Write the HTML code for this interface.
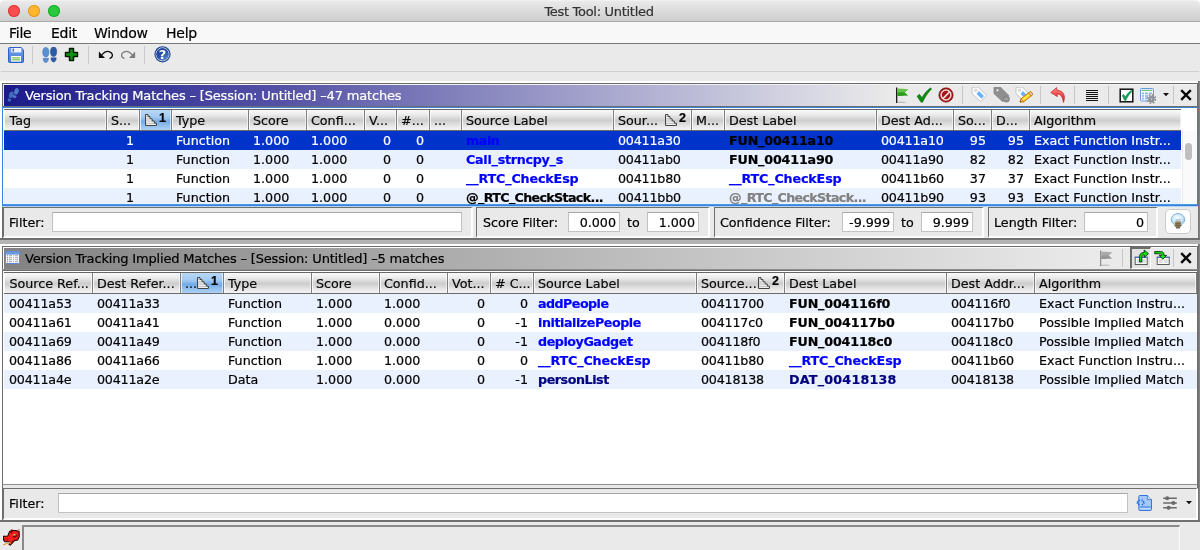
<!DOCTYPE html><html><head><meta charset='utf-8'><title>Test Tool: Untitled</title><style>
html,body{margin:0;padding:0}
body{width:1200px;height:550px;background:#eaeaea;position:relative;overflow:hidden;font-family:'DejaVu Sans','Liberation Sans',sans-serif;font-size:12.7px;color:#000;-webkit-text-stroke:0.2px}
.a{position:absolute}
.t{position:absolute;white-space:nowrap;line-height:19px;height:19px;overflow:hidden;top:0}
.b{font-weight:bold;letter-spacing:-0.45px}
.hd{position:absolute;height:20px;background:linear-gradient(#f9f9f9 0%,#eeeeee 20%,#d8d8d8 42%,#cdcdcd 52%,#d7d7d7 64%,#e8e8e8 82%,#f3f3f3 100%);border-top:1px solid #666;border-bottom:1px solid #6c6c6c}
.hc{position:absolute;top:0;height:20px;line-height:21px;white-space:nowrap;overflow:hidden;border-right:1px solid #7e7e7e;box-sizing:border-box;padding-left:4px;color:#0a0a0a;box-shadow:inset 1px 0 0 rgba(255,255,255,0.75),inset -1px 0 0 rgba(255,255,255,0.6)}
.hs{background:linear-gradient(#b9d7f5 0%,#a3caf1 35%,#72abe6 58%,#8ebdec 75%,#acd0f4 100%)}
.n{position:absolute;font-family:'Liberation Sans',sans-serif;font-weight:bold;font-size:12.5px;line-height:12px;color:#000}
.u{position:relative;top:-1.5px}
.row{position:absolute;left:0;height:19px}
.tf{position:absolute;background:#fff;border:1px solid #c2c2c2;border-top-color:#a8a8a8;box-sizing:border-box;text-align:right;line-height:20px;padding-right:3px;height:20px}
.sep{position:absolute;width:1px;height:18px;background:#c6c6c6}
.lb{position:absolute;height:20px;line-height:20px;white-space:nowrap}
</style></head><body><div id='w' style='position:absolute;left:0;top:0;width:1200px;height:550px;overflow:hidden;will-change:transform'>
<div class='a' style='left:0;top:0;width:1200px;height:6px;background:#fff'></div>
<div class='a' style='left:0;top:0;width:1200px;height:22px;background:linear-gradient(#f5f5f5 0%,#e9e9e9 7%,#cecece 100%);border-bottom:1px solid #aaaaaa;box-sizing:border-box;border-radius:5px 5px 0 0'></div>
<div class='a' style='left:8px;top:5px;width:12px;height:12px;border-radius:50%;background:#fc4d4e;box-shadow:inset 0 0 0 1px #df3a3d'></div>
<div class='a' style='left:28px;top:5px;width:12px;height:12px;border-radius:50%;background:#fdb62d;box-shadow:inset 0 0 0 1px #df9c22'></div>
<div class='a' style='left:48px;top:5px;width:12px;height:12px;border-radius:50%;background:#2ac83c;box-shadow:inset 0 0 0 1px #1cab2b'></div>
<div class='a' style='left:0;top:0;width:1200px;height:22px;line-height:23px;text-align:center;font-size:13px;color:#333;letter-spacing:-0.3px;padding-right:2px;box-sizing:border-box'>Test Tool: Untitled</div>
<div class='a' style='left:0;top:22px;width:1200px;height:21px;background:#f8f8f8;border-bottom:1px solid #7a7a7a'></div>
<div class='a' style='left:9px;top:23px;height:21px;line-height:21px;font-size:14px;letter-spacing:-0.25px'>File</div>
<div class='a' style='left:51px;top:23px;height:21px;line-height:21px;font-size:14px;letter-spacing:-0.25px'>Edit</div>
<div class='a' style='left:94px;top:23px;height:21px;line-height:21px;font-size:14px;letter-spacing:-0.25px'>Window</div>
<div class='a' style='left:166px;top:23px;height:21px;line-height:21px;font-size:14px;letter-spacing:-0.25px'>Help</div>
<div class='a' style='left:1px;top:71px;width:1198px;height:1px;background:#d0d0d0'></div>
<div class='a' style='left:32px;top:46px;width:1px;height:18px;background:#c8c8c8'></div>
<div class='a' style='left:88px;top:46px;width:1px;height:18px;background:#c8c8c8'></div>
<div class='a' style='left:144px;top:46px;width:1px;height:18px;background:#c8c8c8'></div>
<svg class='a' style='left:8px;top:47px' width='16' height='16' viewBox='0 0 16 16'><defs><linearGradient id='sv' x1='0' y1='0' x2='0' y2='1'><stop offset='0' stop-color='#7ea6ee'/><stop offset='0.5' stop-color='#5b8de2'/><stop offset='1' stop-color='#4a7cd8'/></linearGradient></defs>
<path d='M1.5 0.5h11.6l2.4 2.4v11.6a1 1 0 0 1-1 1h-13a1 1 0 0 1-1-1v-13a1 1 0 0 1 1-1z' fill='url(#sv)' stroke='#2f5fc4'/>
<rect x='3.2' y='1' width='10' height='4.4' fill='#eef3ff'/><rect x='4.6' y='1.6' width='1.3' height='3' fill='#2f57b0'/>
<rect x='3.2' y='9' width='9.8' height='5.6' fill='#fff'/><rect x='4.2' y='10.3' width='7.8' height='1.2' fill='#72bc44'/><rect x='4.2' y='12.2' width='7.8' height='1.2' fill='#72bc44'/></svg><svg class='a' style='left:42px;top:47px' width='16' height='16' viewBox='0 0 16 16'><g transform='translate(3.8 8) rotate(0) scale(1.0)'><path d='M0 -7.6c2.3 0 3.3 2.6 3.1 5.4c-0.2 2.5-1 4.2-3.1 4.2s-2.9-1.7-3.1-4.2c-0.2-2.8 0.8-5.4 3.1-5.4z' fill='#5a8fd2' stroke='#3f72b8' stroke-width='0.5'/><path d='M-2.6 3.3h5.2c0.1 2.6-0.9 4.2-2.6 4.2s-2.7-1.6-2.6-4.2z' fill='#5a8fd2' stroke='#3f72b8' stroke-width='0.5'/></g><g transform='translate(11.6 7.5) rotate(0) scale(1.0)'><path d='M0 -7.6c2.3 0 3.3 2.6 3.1 5.4c-0.2 2.5-1 4.2-3.1 4.2s-2.9-1.7-3.1-4.2c-0.2-2.8 0.8-5.4 3.1-5.4z' fill='#2e5aa6' stroke='#234a90' stroke-width='0.5'/><path d='M-2.6 3.3h5.2c0.1 2.6-0.9 4.2-2.6 4.2s-2.7-1.6-2.6-4.2z' fill='#2e5aa6' stroke='#234a90' stroke-width='0.5'/></g></svg><svg class='a' style='left:64px;top:47px' width='15' height='15' viewBox='0 0 15 15'><path d='M5.5 1.5h4v4h4v4h-4v4h-4v-4h-4v-4h4z' fill='#109410' stroke='#011a01' stroke-width='1.5' stroke-linejoin='round'/></svg><svg class='a' style='left:98px;top:48px' width='16' height='14' viewBox='0 0 16 14'><path d='M0.85 3.5V9.9H7z' fill='#0c0c0c'/><path d='M4.2 6.4C6 4.2 8 3.2 9.8 3.3C12.4 3.5 14.6 5.4 14.4 7.6C14.3 8.8 13.4 9.8 12 10.3' fill='none' stroke='#0c0c0c' stroke-width='1.3' stroke-linecap='round'/></svg><svg class='a' style='left:119.8px;top:48px' width='16' height='14' viewBox='0 0 16 14'><g transform='translate(16 0) scale(-1 1)'><path d='M0.85 3.5V9.9H7z' fill='#7c7c7c'/><path d='M4.2 6.4C6 4.2 8 3.2 9.8 3.3C12.4 3.5 14.6 5.4 14.4 7.6C14.3 8.8 13.4 9.8 12 10.3' fill='none' stroke='#7c7c7c' stroke-width='1.3' stroke-linecap='round'/></g></svg><svg class='a' style='left:153.5px;top:46.4px' width='17' height='17' viewBox='0 0 17 17'><defs><linearGradient id='hg' x1='0.2' y1='0' x2='0.9' y2='1'><stop offset='0' stop-color='#173a8c'/><stop offset='0.55' stop-color='#2c55a8'/><stop offset='1' stop-color='#6c9ad8'/></linearGradient></defs>
<circle cx='8.5' cy='8.3' r='8.1' fill='#1d4796'/><circle cx='8.5' cy='8.3' r='6.5' fill='none' stroke='#fff' stroke-width='0.8'/><circle cx='8.5' cy='8.3' r='6.1' fill='url(#hg)'/>
<text x='8.5' y='13.2' text-anchor='middle' font-family="'DejaVu Sans','Liberation Sans',sans-serif" font-weight='bold' font-size='13' fill='#fff'>?</text></svg>
<div class='a' style='left:0;top:81px;width:1200px;height:159px;background:#fff'></div>
<div class='a' style='left:1198px;top:81px;width:2px;height:159px;background:linear-gradient(90deg,#6a6a6a,#8c8c8c)'></div>
<div class='a' style='left:0;top:238px;width:1200px;height:2px;background:#707070'></div>
<div class='a' style='left:2px;top:83px;width:1196px;height:155px;border:1px solid #6c6c6c;box-sizing:border-box;background:#eaeaea'></div>
<div class='a' style='left:3px;top:84px;width:1194px;height:1px;background:#f2f2f2'></div>
<div class='a' style='left:3px;top:237px;width:1195px;height:1px;background:#fdfdfd'></div>
<div class='a' style='left:4px;top:85px;width:888px;height:21px;background:linear-gradient(90deg,#1a1a8a 0%,#2f2e94 10%,#5653a6 32%,#7573b5 45%,#a6a5cd 67%,#d6d6e3 90%,#eaeaea 100%)'></div>
<div class='a' style='left:25px;top:85px;height:21px;line-height:21px;color:#fff;font-size:13px;letter-spacing:-0.17px;white-space:nowrap'>Version Tracking Matches – [Session: Untitled] –47 matches</div>
<svg class='a' style='left:7px;top:87px' width='14' height='16' viewBox='0 0 14 16'><g opacity='0.8'><g transform='translate(3.6 9.6) rotate(20) scale(0.7)'><path d='M0 -7.6c2.3 0 3.3 2.6 3.1 5.4c-0.2 2.5-1 4.2-3.1 4.2s-2.9-1.7-3.1-4.2c-0.2-2.8 0.8-5.4 3.1-5.4z' fill='#4a7fc4' stroke='none' stroke-width='0.5'/><path d='M-2.6 3.3h5.2c0.1 2.6-0.9 4.2-2.6 4.2s-2.7-1.6-2.6-4.2z' fill='#4a7fc4' stroke='none' stroke-width='0.5'/></g><g transform='translate(8.8 6.2) rotate(20) scale(0.7)'><path d='M0 -7.6c2.3 0 3.3 2.6 3.1 5.4c-0.2 2.5-1 4.2-3.1 4.2s-2.9-1.7-3.1-4.2c-0.2-2.8 0.8-5.4 3.1-5.4z' fill='#5a92d4' stroke='none' stroke-width='0.5'/><path d='M-2.6 3.3h5.2c0.1 2.6-0.9 4.2-2.6 4.2s-2.7-1.6-2.6-4.2z' fill='#5a92d4' stroke='none' stroke-width='0.5'/></g></g></svg><svg class='a' style='left:895px;top:87px' width='16' height='16' viewBox='0 0 16 16'><g opacity='1'><rect x='1' y='0.5' width='1.3' height='15.5' fill='#1c1c1c'/><path d='M2.3 1.6C6 2.2 9 1.6 13.4 2.4L9.6 5.6L13 8.6C9 8.2 6 9.4 2.3 9z' fill='#62c446'/><path d='M2.3 5.5C6 5.6 8 5 9.6 5.6L13 8.6C9 8.2 6 9.4 2.3 9z' fill='#2f9a1e'/><ellipse cx='6' cy='15.3' rx='5.5' ry='0.7' fill='#000' opacity='0.18'/></g></svg><svg class='a' style='left:916px;top:87px' width='16' height='16' viewBox='0 0 16 16'><path d='M1 9.2L3.4 7.2L6 10.6C8.4 6.4 11 3.2 14.6 0.8L15.6 2C12 5.6 9.4 9.6 6.6 15.2L5 15.2z' fill='#118a11' stroke='#0a6a0a' stroke-width='0.5'/></svg><svg class='a' style='left:938px;top:87px' width='16' height='16' viewBox='0 0 16 16'><circle cx='8' cy='8' r='7.2' fill='#a51212'/><circle cx='8' cy='8' r='4.9' fill='none' stroke='#f3dada' stroke-width='1.5'/><path d='M4.9 11.6L11.6 4.9' stroke='#f3dada' stroke-width='1.7'/><circle cx='8' cy='8' r='7.2' fill='none' stroke='#7c0a0a' stroke-width='0.6'/></svg><svg class='a' style='left:971px;top:87px' width='17' height='17' viewBox='0 0 17 17'><path d='M1 0.3L7.3 0L15.7 8.4L9.7 14.7L1 6.6z' fill='#fdfdfd' stroke='#b8b8b8' stroke-width='0.8' stroke-linejoin='round'/><path d='M7.9 4.1L13 9L10.6 11.7L5.5 6.9z' fill='#68b3fd'/><circle cx='4.5' cy='3.3' r='1.2' fill='#f2f2f2' stroke='#b0b0b0' stroke-width='0.6'/></svg><svg class='a' style='left:993.2px;top:87px' width='18' height='17' viewBox='0 0 18 17'><path d='M1 0.3L7.3 0L15.7 8.4L9.7 14.7L1 6.6z' fill='#8e8e8e' stroke='#848484' stroke-width='0.8' stroke-linejoin='round'/><circle cx='4.5' cy='3.3' r='1.2' fill='#f4f4f4' stroke='#9a9a9a' stroke-width='0.6'/><circle cx='13.4' cy='12' r='3.2' fill='#8b8b8b' stroke='#7c7c7c' stroke-width='0.5'/><rect x='11.4' y='11.4' width='4' height='1.2' fill='#aeaeae'/></svg><svg class='a' style='left:1015.3px;top:87px' width='18' height='17' viewBox='0 0 18 17'><path d='M1 0.3L7.3 0L15.7 8.4L9.7 14.7L1 6.6z' fill='#fdfdfd' stroke='#b8b8b8' stroke-width='0.8' stroke-linejoin='round'/><path d='M7.9 4.1L13 9L10.6 11.7L5.5 6.9z' fill='#68b3fd'/><circle cx='4.5' cy='3.3' r='1.2' fill='#f2f2f2' stroke='#b0b0b0' stroke-width='0.6'/><g transform='translate(5 15) rotate(-37.5)'><path d='M0 0L3-2h10.4a1.6 1.6 0 0 1 1.6 1.6v0.8a1.6 1.6 0 0 1-1.6 1.6h-10.4z' fill='#f8d51e' stroke='#c87812' stroke-width='0.9' stroke-linejoin='round'/><rect x='3' y='-0.7' width='9.6' height='1.1' fill='#fbe96a'/><path d='M0 0L3-2v4z' fill='#f3c79a' stroke='#b86a10' stroke-width='0.6'/><path d='M0 0l1.1-0.75v1.5z' fill='#4a2a08'/><path d='M12.4-2h1a1.6 1.6 0 0 1 1.6 1.6v0.8a1.6 1.6 0 0 1-1.6 1.6h-1z' fill='#f6c9a8' stroke='#b86a10' stroke-width='0.7'/></g></svg><svg class='a' style='left:1050px;top:87px' width='17' height='16' viewBox='0 0 17 16'><defs><linearGradient id='ra' x1='0' y1='0' x2='0' y2='1'><stop offset='0' stop-color='#ff8d8d'/><stop offset='0.5' stop-color='#f04848'/><stop offset='1' stop-color='#d82424'/></linearGradient></defs>
<path d='M6.6 0.6L0.8 5.6L7.4 9.6L7 6.9C10.6 6.8 12.6 9.6 13.4 15.4C16.2 8.6 13 3.4 6.9 3.2z' fill='url(#ra)' stroke='#c42020' stroke-width='0.7' stroke-linejoin='round'/></svg><svg class='a' style='left:1086px;top:90px' width='12' height='11' viewBox='0 0 12 11'><rect x='0' y='0' width='12' height='1' fill='#111'/><rect x='0' y='2' width='12' height='1' fill='#111'/><rect x='0' y='4' width='12' height='1' fill='#111'/><rect x='0' y='6' width='12' height='1' fill='#111'/><rect x='0' y='8' width='12' height='1' fill='#111'/><rect x='0' y='10' width='12' height='1' fill='#111'/></svg><svg class='a' style='left:1118.6px;top:87.6px' width='15' height='15' viewBox='0 0 15 15'><rect x='1.2' y='1.2' width='12.6' height='12.6' fill='#fff' stroke='#111' stroke-width='1.5'/><path d='M3.2 7.6L4.6 6.4L6.4 8.8C8 6 10 3.8 12.6 2.2L13.2 3.2C10.6 5.6 8.6 8.6 6.8 12.4L5.6 12.4z' fill='#14a05a' stroke='#0b8048' stroke-width='0.5'/></svg><svg class='a' style='left:1140px;top:88px' width='16' height='16' viewBox='0 0 16 16'><rect x='0.5' y='0.5' width='13' height='12.5' rx='1' fill='#f4f8ff' stroke='#6b9ae0'/><rect x='1' y='1' width='12' height='1.8' fill='#d4e4fb'/><rect x='2' y='2' width='10' height='1' fill='#6ec66e'/>
<g fill='#8db0e8'><rect x='2' y='4.6' width='2' height='1.6'/><rect x='5' y='4.6' width='3' height='1.6'/><rect x='9' y='4.6' width='3' height='1.6'/><rect x='2' y='7.2' width='2' height='1.6'/><rect x='5' y='7.2' width='3' height='1.6'/><rect x='2' y='9.8' width='2' height='1.6'/><rect x='5' y='9.8' width='2' height='1.6'/></g>
<g transform='translate(11.4 11)'><circle r='4.2' fill='none' stroke='#8a8a8a' stroke-width='1.6' stroke-dasharray='1.7 1.6'/><circle r='3.1' fill='#9d9d9d' stroke='#777' stroke-width='0.5'/><circle r='1.5' fill='#9cc0ee' stroke='#6a6a6a' stroke-width='0.5'/></g></svg><svg class='a' style='left:1163px;top:93px' width='6' height='4' viewBox='0 0 6 4'><path d='M0 0h6L3 3.2z' fill='#111'/></svg><svg class='a' style='left:1180px;top:89px' width='12' height='12' viewBox='0 0 12 12'><path d='M1.2 1.2L10.8 10.8M10.8 1.2L1.2 10.8' stroke='#0a0a0a' stroke-width='2.4' stroke-linecap='butt'/></svg><div class='sep' style='left:962px;top:86px'></div><div class='sep' style='left:1040px;top:86px'></div><div class='sep' style='left:1074px;top:86px'></div><div class='sep' style='left:1108px;top:86px'></div><div class='sep' style='left:1173px;top:86px'></div>
<div class='a' style='left:2px;top:106px;width:1196px;height:1px;background:#6e6e6e'></div>
<div class='a' style='left:2px;top:107px;width:1196px;height:99px;border:1px solid #3484de;box-sizing:border-box;background:#fff'></div>
<div class='a' style='left:3px;top:204px;width:1194px;height:1px;background:#4e97e4'></div>
<div class='a' style='left:2px;top:206px;width:1196px;height:1px;background:#b5d3f2'></div>
<div class='hd' style='left:4px;top:109px;width:1177px'>
<div class='hc' style='left:0px;width:103px;padding-left:5.5px;'>Tag</div>
<div class='hc' style='left:103px;width:33px;'>S...</div>
<div class='hc hs' style='left:136px;width:32px;'><svg class='a' style='left:5px;top:4px' width='12' height='12' viewBox='0 0 12 12'><path d='M0.55 0.55H3V2.6H5V4.8H7.1V7H9.3V9.2H11.45V11.45H0.55z' fill='#fbfbfb' stroke='#3c3c3c' stroke-width='1' stroke-linejoin='round'/><path d='M1.1 2.7H3M1.1 4.9H5M1.1 7.1H7.1M1.1 9.3H9.3' stroke='#a4a4a4' stroke-width='0.8'/><rect x='1.1' y='5.3' width='5' height='1.3' fill='#d4d4d4'/></svg><div class='n' style='left:19px;top:2px'>1</div></div>
<div class='hc' style='left:168px;width:77px;'>Type</div>
<div class='hc' style='left:245px;width:58px;'>Score</div>
<div class='hc' style='left:303px;width:58px;'>Confi...</div>
<div class='hc' style='left:361px;width:32px;'>V...</div>
<div class='hc' style='left:393px;width:33px;'>#...</div>
<div class='hc' style='left:426px;width:32px;'>...</div>
<div class='hc' style='left:458px;width:152px;'>Source Label</div>
<div class='hc' style='left:610px;width:78px;'>Sour...<svg class='a' style='left:51px;top:4px' width='12' height='12' viewBox='0 0 12 12'><path d='M0.55 0.55H3V2.6H5V4.8H7.1V7H9.3V9.2H11.45V11.45H0.55z' fill='#fbfbfb' stroke='#3c3c3c' stroke-width='1' stroke-linejoin='round'/><path d='M1.1 2.7H3M1.1 4.9H5M1.1 7.1H7.1M1.1 9.3H9.3' stroke='#a4a4a4' stroke-width='0.8'/><rect x='1.1' y='5.3' width='5' height='1.3' fill='#d4d4d4'/></svg><div class='n' style='left:65px;top:2px'>2</div></div>
<div class='hc' style='left:688px;width:33px;'>M...</div>
<div class='hc' style='left:721px;width:152px;'>Dest Label</div>
<div class='hc' style='left:873px;width:77px;'>Dest Ad...</div>
<div class='hc' style='left:950px;width:38px;'>So...</div>
<div class='hc' style='left:988px;width:38px;'>D...</div>
<div class='hc' style='left:1026px;width:152px;border-right-color:transparent;'>Algorithm</div>
</div>
<div class='a' style='left:4px;top:131px;width:1177px;height:73px;overflow:hidden'>
<div class='row' style='top:0px;width:1177px;background:#0033c9;color:#fff'>
<div class='t' style='left:102px;width:33px;text-align:right;padding-right:5px;box-sizing:border-box;'>1</div>
<div class='t' style='left:167px;width:77px;padding-left:5px;box-sizing:border-box;'>Function</div>
<div class='t' style='left:244px;width:58px;padding-left:5px;box-sizing:border-box;'>1.000</div>
<div class='t' style='left:302px;width:58px;padding-left:5px;box-sizing:border-box;'>1.000</div>
<div class='t' style='left:360px;width:32px;text-align:right;padding-right:5px;box-sizing:border-box;'>0</div>
<div class='t' style='left:392px;width:33px;text-align:right;padding-right:5px;box-sizing:border-box;'>0</div>
<div class='t b' style='left:457px;width:152px;padding-left:5px;box-sizing:border-box;color:#0000ff;'>main</div>
<div class='t' style='left:609px;width:78px;padding-left:5px;box-sizing:border-box;letter-spacing:-0.2px;'>00411a30</div>
<div class='t b' style='left:720px;width:152px;padding-left:5px;box-sizing:border-box;color:#000;letter-spacing:-0.17px;'>FUN<span class='u'>_</span>00411a10</div>
<div class='t' style='left:872px;width:77px;padding-left:5px;box-sizing:border-box;letter-spacing:-0.2px;'>00411a10</div>
<div class='t' style='left:949px;width:38px;text-align:right;padding-right:5px;box-sizing:border-box;'>95</div>
<div class='t' style='left:987px;width:38px;text-align:right;padding-right:5px;box-sizing:border-box;'>95</div>
<div class='t' style='left:1025px;width:152px;padding-left:5px;box-sizing:border-box;'>Exact Function Instr...</div>
</div>
<div class='row' style='top:19px;width:1177px;background:#eaf1fe;color:#000'>
<div class='t' style='left:102px;width:33px;text-align:right;padding-right:5px;box-sizing:border-box;'>1</div>
<div class='t' style='left:167px;width:77px;padding-left:5px;box-sizing:border-box;'>Function</div>
<div class='t' style='left:244px;width:58px;padding-left:5px;box-sizing:border-box;'>1.000</div>
<div class='t' style='left:302px;width:58px;padding-left:5px;box-sizing:border-box;'>1.000</div>
<div class='t' style='left:360px;width:32px;text-align:right;padding-right:5px;box-sizing:border-box;'>0</div>
<div class='t' style='left:392px;width:33px;text-align:right;padding-right:5px;box-sizing:border-box;'>0</div>
<div class='t b' style='left:457px;width:152px;padding-left:5px;box-sizing:border-box;color:#0000ff;letter-spacing:-0.26px;'>Call<span class='u'>_</span>strncpy<span class='u'>_</span>s</div>
<div class='t' style='left:609px;width:78px;padding-left:5px;box-sizing:border-box;letter-spacing:-0.2px;'>00411ab0</div>
<div class='t b' style='left:720px;width:152px;padding-left:5px;box-sizing:border-box;color:#000;letter-spacing:-0.17px;'>FUN<span class='u'>_</span>00411a90</div>
<div class='t' style='left:872px;width:77px;padding-left:5px;box-sizing:border-box;letter-spacing:-0.2px;'>00411a90</div>
<div class='t' style='left:949px;width:38px;text-align:right;padding-right:5px;box-sizing:border-box;'>82</div>
<div class='t' style='left:987px;width:38px;text-align:right;padding-right:5px;box-sizing:border-box;'>82</div>
<div class='t' style='left:1025px;width:152px;padding-left:5px;box-sizing:border-box;'>Exact Function Instr...</div>
</div>
<div class='row' style='top:38px;width:1177px;background:#fff;color:#000'>
<div class='t' style='left:102px;width:33px;text-align:right;padding-right:5px;box-sizing:border-box;'>1</div>
<div class='t' style='left:167px;width:77px;padding-left:5px;box-sizing:border-box;'>Function</div>
<div class='t' style='left:244px;width:58px;padding-left:5px;box-sizing:border-box;'>1.000</div>
<div class='t' style='left:302px;width:58px;padding-left:5px;box-sizing:border-box;'>1.000</div>
<div class='t' style='left:360px;width:32px;text-align:right;padding-right:5px;box-sizing:border-box;'>0</div>
<div class='t' style='left:392px;width:33px;text-align:right;padding-right:5px;box-sizing:border-box;'>0</div>
<div class='t b' style='left:457px;width:152px;padding-left:5px;box-sizing:border-box;color:#0000ff;letter-spacing:-0.14px;'><span class='u'>_</span><span class='u'>_</span>RTC<span class='u'>_</span>CheckEsp</div>
<div class='t' style='left:609px;width:78px;padding-left:5px;box-sizing:border-box;letter-spacing:-0.2px;'>00411b80</div>
<div class='t b' style='left:720px;width:152px;padding-left:5px;box-sizing:border-box;color:#0000ff;letter-spacing:-0.14px;'><span class='u'>_</span><span class='u'>_</span>RTC<span class='u'>_</span>CheckEsp</div>
<div class='t' style='left:872px;width:77px;padding-left:5px;box-sizing:border-box;letter-spacing:-0.2px;'>00411b60</div>
<div class='t' style='left:949px;width:38px;text-align:right;padding-right:5px;box-sizing:border-box;'>37</div>
<div class='t' style='left:987px;width:38px;text-align:right;padding-right:5px;box-sizing:border-box;'>37</div>
<div class='t' style='left:1025px;width:152px;padding-left:5px;box-sizing:border-box;'>Exact Function Instr...</div>
</div>
<div class='row' style='top:57px;width:1177px;background:#eaf1fe;color:#000'>
<div class='t' style='left:102px;width:33px;text-align:right;padding-right:5px;box-sizing:border-box;'>1</div>
<div class='t' style='left:167px;width:77px;padding-left:5px;box-sizing:border-box;'>Function</div>
<div class='t' style='left:244px;width:58px;padding-left:5px;box-sizing:border-box;'>1.000</div>
<div class='t' style='left:302px;width:58px;padding-left:5px;box-sizing:border-box;'>1.000</div>
<div class='t' style='left:360px;width:32px;text-align:right;padding-right:5px;box-sizing:border-box;'>0</div>
<div class='t' style='left:392px;width:33px;text-align:right;padding-right:5px;box-sizing:border-box;'>0</div>
<div class='t b' style='left:457px;width:152px;padding-left:5px;box-sizing:border-box;color:#000;letter-spacing:-0.67px;'>@<span class='u'>_</span>RTC<span class='u'>_</span>CheckStack...</div>
<div class='t' style='left:609px;width:78px;padding-left:5px;box-sizing:border-box;letter-spacing:-0.2px;'>00411bb0</div>
<div class='t b' style='left:720px;width:152px;padding-left:5px;box-sizing:border-box;color:#808080;letter-spacing:-0.67px;'>@<span class='u'>_</span>RTC<span class='u'>_</span>CheckStack...</div>
<div class='t' style='left:872px;width:77px;padding-left:5px;box-sizing:border-box;letter-spacing:-0.2px;'>00411b90</div>
<div class='t' style='left:949px;width:38px;text-align:right;padding-right:5px;box-sizing:border-box;'>93</div>
<div class='t' style='left:987px;width:38px;text-align:right;padding-right:5px;box-sizing:border-box;'>93</div>
<div class='t' style='left:1025px;width:152px;padding-left:5px;box-sizing:border-box;'>Exact Function Instr...</div>
</div>
</div>
<div class='a' style='left:1182px;top:131px;width:15px;height:73px;background:#fafafa;border-left:1px solid #eaeaea;box-sizing:border-box'></div>
<div class='a' style='left:1185px;top:143px;width:7px;height:17px;border-radius:3.5px;background:#bebebe'></div>
<div class='a' style='left:3px;top:207px;width:1195px;height:31px;background:#eaeaea'></div>
<div class='a' style='left:3px;top:207px;width:470px;height:31px;border-top:1px solid #6e6e6e;border-left:1px solid #6e6e6e;border-right:2px solid #fdfdfd;border-bottom:2px solid #fdfdfd;box-sizing:border-box;background:#e9e9e9'></div>
<div class='a' style='left:476px;top:207px;width:234px;height:31px;border-top:1px solid #6e6e6e;border-left:1px solid #6e6e6e;border-right:2px solid #fdfdfd;border-bottom:2px solid #fdfdfd;box-sizing:border-box;background:#e9e9e9'></div>
<div class='a' style='left:714px;top:207px;width:270px;height:31px;border-top:1px solid #6e6e6e;border-left:1px solid #6e6e6e;border-right:2px solid #fdfdfd;border-bottom:2px solid #fdfdfd;box-sizing:border-box;background:#e9e9e9'></div>
<div class='a' style='left:988px;top:207px;width:170px;height:31px;border-top:1px solid #6e6e6e;border-left:1px solid #6e6e6e;border-right:2px solid #fdfdfd;border-bottom:2px solid #fdfdfd;box-sizing:border-box;background:#e9e9e9'></div>
<div class='lb' style='left:9px;top:213px'>Filter:</div>
<div class='tf' style='left:52px;top:212px;width:410px'></div>
<div class='lb' style='left:483px;top:213px'>Score Filter:</div>
<div class='tf' style='left:568px;top:212px;width:52px'>0.000</div>
<div class='lb' style='left:627px;top:213px'>to</div>
<div class='tf' style='left:647px;top:212px;width:52px'>1.000</div>
<div class='lb' style='left:720px;top:213px'>Confidence Filter:</div>
<div class='tf' style='left:842px;top:212px;width:52px'>-9.999</div>
<div class='lb' style='left:901px;top:213px'>to</div>
<div class='tf' style='left:921px;top:212px;width:52px'>9.999</div>
<div class='lb' style='left:994px;top:213px'>Length Filter:</div>
<div class='tf' style='left:1084px;top:212px;width:64px'>0</div>
<div class='a' style='left:1165px;top:209px;width:26px;height:25px;background:#fff;border:1px solid #cacaca;border-radius:5px;box-sizing:border-box'></div><svg class='a' style='left:1170px;top:213.3px' width='16' height='17' viewBox='0 0 16 17'><defs><radialGradient id='bg1' cx='0.45' cy='0.35' r='0.7'><stop offset='0' stop-color='#f6fcff'/><stop offset='0.55' stop-color='#cfe6f4'/><stop offset='1' stop-color='#8cbfe2'/></radialGradient></defs>
<path d='M8 0.6C11.8 0.6 14.7 3.3 14.7 6.6C14.7 9 13 10.4 11.6 11.6L11.2 13H4.8L4.4 11.6C3 10.4 1.3 9 1.3 6.6C1.3 3.3 4.2 0.6 8 0.6z' fill='url(#bg1)' stroke='#74aede' stroke-width='1'/>
<rect x='5.6' y='6' width='4.8' height='4' fill='#a9c6da' opacity='0.8'/><path d='M5.2 8.4h5.6v5a1 1 0 0 1-1 1h-3.6a1 1 0 0 1-1-1z' fill='#9c8156'/><rect x='5.2' y='10.4' width='5.6' height='0.9' fill='#6e5836'/><rect x='5.2' y='12.2' width='5.6' height='0.9' fill='#6e5836'/><rect x='6' y='14.2' width='4' height='1.2' fill='#4e4e4e'/></svg>
<div class='a' style='left:0;top:240px;width:1200px;height:4px;background:#b4b4b4'></div>
<div class='a' style='left:0;top:244px;width:1200px;height:278px;background:#fff'></div>
<div class='a' style='left:1198px;top:244px;width:2px;height:278px;background:linear-gradient(90deg,#6a6a6a,#8c8c8c)'></div>
<div class='a' style='left:0;top:520px;width:1200px;height:2px;background:#707070'></div>
<div class='a' style='left:2px;top:246px;width:1196px;height:274px;border:1px solid #6c6c6c;box-sizing:border-box;background:#eaeaea'></div>
<div class='a' style='left:3px;top:247px;width:1194px;height:1px;background:#f2f2f2'></div>
<div class='a' style='left:3px;top:519px;width:1195px;height:1px;background:#fdfdfd'></div>
<div class='a' style='left:3px;top:247px;width:1194px;height:1px;background:#fbfbfb'></div><div class='a' style='left:3px;top:247px;width:1px;height:23px;background:#fbfbfb'></div>
<div class='a' style='left:4px;top:248px;width:1092px;height:21px;background:linear-gradient(90deg,#828282 0%,#eaeaea 100%)'></div>
<div class='a' style='left:25px;top:248px;height:21px;line-height:21px;color:#000;font-size:13px;letter-spacing:-0.17px;white-space:nowrap'>Version Tracking Implied Matches – [Session: Untitled] –5 matches</div>
<svg class='a' style='left:5px;top:251px' width='15' height='13' viewBox='0 0 15 13'><rect x='0.5' y='0.5' width='14' height='12' rx='1' fill='#fbfcff' stroke='#5d8ad6'/><path d='M0.5 3.2v-1.7a1 1 0 0 1 1-1h12a1 1 0 0 1 1 1v1.7z' fill='#6c99e2' stroke='#5d8ad6' stroke-width='0.6'/>
<g fill='#3f8ef0'><rect x='2' y='4.2' width='1.1' height='1.1'/><rect x='2' y='6.2' width='1.1' height='1.1'/><rect x='2' y='8.2' width='1.1' height='1.1'/><rect x='2' y='10.2' width='1.1' height='1.1'/></g>
<g fill='#9a9a9a'><rect x='4' y='4.3' width='3' height='0.9'/><rect x='8' y='4.3' width='1' height='0.9'/><rect x='10' y='4.3' width='3' height='0.9'/><rect x='4' y='6.3' width='3' height='0.9'/><rect x='8' y='6.3' width='1' height='0.9'/><rect x='10' y='6.3' width='3' height='0.9'/><rect x='4' y='8.3' width='3' height='0.9'/><rect x='8' y='8.3' width='1' height='0.9'/><rect x='10' y='8.3' width='3' height='0.9'/><rect x='4' y='10.3' width='3' height='0.9'/><rect x='8' y='10.3' width='1' height='0.9'/><rect x='10' y='10.3' width='3' height='0.9'/></g></svg><svg class='a' style='left:1099px;top:250px' width='16' height='16' viewBox='0 0 16 16'><g opacity='0.9'><rect x='1' y='0.5' width='1.3' height='15.5' fill='#8a8a8a'/><path d='M2.3 1.6C6 2.2 9 1.6 13.4 2.4L9.6 5.6L13 8.6C9 8.2 6 9.4 2.3 9z' fill='#a4a4a4'/><path d='M2.3 5.5C6 5.6 8 5 9.6 5.6L13 8.6C9 8.2 6 9.4 2.3 9z' fill='#8e8e8e'/><ellipse cx='6' cy='15.3' rx='5.5' ry='0.7' fill='#000' opacity='0.18'/></g></svg><div class='sep' style='left:1122px;top:249px'></div><div class='sep' style='left:1173px;top:249px'></div><div class='a' style='left:1130px;top:247px;width:21px;height:22px;background:#e2e2e2;border-top:2px solid #6c6c6c;border-left:2px solid #6c6c6c;border-right:1px solid #fff;border-bottom:1px solid #fff;box-sizing:border-box'></div><svg class='a' style='left:1134px;top:249px' width='16' height='17' viewBox='0 0 16 17'><g transform='translate(0.7 7.6)'><rect x='0.5' y='0.6' width='12' height='7.3' fill='#fff' stroke='#5a5a5a' stroke-width='1'/><rect x='0' y='0.2' width='13' height='0.9' fill='#2a6cf0'/><rect x='2' y='3' width='4' height='0.9' fill='#b4b4b4'/><rect x='7' y='3' width='4' height='0.9' fill='#b4b4b4'/><rect x='2' y='5' width='4' height='0.9' fill='#b4b4b4'/><rect x='7' y='5' width='4' height='0.9' fill='#b4b4b4'/></g><path d='M5.6 13V7.4C5.6 5 7 3.6 10.2 3.6V1L14.4 4.7L10.2 8.4V5.8C8.6 5.8 7.8 6.4 7.8 7.6V13z' fill='#16e616' stroke='#042c04' stroke-width='0.9' stroke-linejoin='round'/></svg><svg class='a' style='left:1154px;top:249px' width='16' height='17' viewBox='0 0 16 17'><g transform='translate(2.7 7.6)'><rect x='0.5' y='0.6' width='12' height='7.3' fill='#fff' stroke='#5a5a5a' stroke-width='1'/><rect x='0' y='0.2' width='13' height='0.9' fill='#2a6cf0'/><rect x='2' y='3' width='4' height='0.9' fill='#b4b4b4'/><rect x='7' y='3' width='4' height='0.9' fill='#b4b4b4'/><rect x='2' y='5' width='4' height='0.9' fill='#b4b4b4'/><rect x='7' y='5' width='4' height='0.9' fill='#b4b4b4'/></g><path d='M0.7 2.6H6.6C9.4 2.6 10 4 10 6.4H12.6L8.8 10.2L5.2 6.4H7.8C7.8 5.2 7.4 4.8 6.2 4.8H0.7z' fill='#16e616' stroke='#042c04' stroke-width='0.9' stroke-linejoin='round'/></svg><svg class='a' style='left:1180px;top:252px' width='12' height='12' viewBox='0 0 12 12'><path d='M1.2 1.2L10.8 10.8M10.8 1.2L1.2 10.8' stroke='#0a0a0a' stroke-width='2.4' stroke-linecap='butt'/></svg>
<div class='a' style='left:2px;top:269px;width:1196px;height:1px;background:#8c8c8c'></div>
<div class='a' style='left:2px;top:270px;width:1196px;height:215px;border:1px solid #6e6e6e;border-bottom-color:#8e8e8e;box-sizing:border-box;background:#fff'></div>
<div class='hd' style='left:4px;top:272px;width:1193px'>
<div class='hc' style='left:0px;width:89px;padding-left:5.5px;'>Source Ref...</div>
<div class='hc' style='left:89px;width:88px;'>Dest Refer...</div>
<div class='hc hs' style='left:177px;width:43px;'>...<svg class='a' style='left:16px;top:4px' width='12' height='12' viewBox='0 0 12 12'><path d='M0.55 0.55H3V2.6H5V4.8H7.1V7H9.3V9.2H11.45V11.45H0.55z' fill='#fbfbfb' stroke='#3c3c3c' stroke-width='1' stroke-linejoin='round'/><path d='M1.1 2.7H3M1.1 4.9H5M1.1 7.1H7.1M1.1 9.3H9.3' stroke='#a4a4a4' stroke-width='0.8'/><rect x='1.1' y='5.3' width='5' height='1.3' fill='#d4d4d4'/></svg><div class='n' style='left:30px;top:2px'>1</div></div>
<div class='hc' style='left:220px;width:88px;'>Type</div>
<div class='hc' style='left:308px;width:68px;'>Score</div>
<div class='hc' style='left:376px;width:68px;'>Confid...</div>
<div class='hc' style='left:444px;width:43px;'>Vot...</div>
<div class='hc' style='left:487px;width:43px;'># C...</div>
<div class='hc' style='left:530px;width:163px;'>Source Label</div>
<div class='hc' style='left:693px;width:88px;'>Source...<svg class='a' style='left:61px;top:4px' width='12' height='12' viewBox='0 0 12 12'><path d='M0.55 0.55H3V2.6H5V4.8H7.1V7H9.3V9.2H11.45V11.45H0.55z' fill='#fbfbfb' stroke='#3c3c3c' stroke-width='1' stroke-linejoin='round'/><path d='M1.1 2.7H3M1.1 4.9H5M1.1 7.1H7.1M1.1 9.3H9.3' stroke='#a4a4a4' stroke-width='0.8'/><rect x='1.1' y='5.3' width='5' height='1.3' fill='#d4d4d4'/></svg><div class='n' style='left:75px;top:2px'>2</div></div>
<div class='hc' style='left:781px;width:162px;'>Dest Label</div>
<div class='hc' style='left:943px;width:88px;'>Dest Addr...</div>
<div class='hc' style='left:1031px;width:162px;'>Algorithm</div>
</div>
<div class='a' style='left:4px;top:294px;width:1193px;height:190px;overflow:hidden'>
<div class='row' style='top:0px;width:1193px;background:#eaf1fe'>
<div class='t' style='left:0px;width:88px;padding-left:5px;box-sizing:border-box;letter-spacing:-0.2px;'>00411a53</div>
<div class='t' style='left:88px;width:88px;padding-left:5px;box-sizing:border-box;letter-spacing:-0.2px;'>00411a33</div>
<div class='t' style='left:219px;width:88px;padding-left:5px;box-sizing:border-box;'>Function</div>
<div class='t' style='left:307px;width:68px;padding-left:5px;box-sizing:border-box;'>1.000</div>
<div class='t' style='left:375px;width:68px;padding-left:5px;box-sizing:border-box;'>1.000</div>
<div class='t' style='left:443px;width:43px;text-align:right;padding-right:5px;box-sizing:border-box;'>0</div>
<div class='t' style='left:486px;width:43px;text-align:right;padding-right:5px;box-sizing:border-box;'>0</div>
<div class='t b' style='left:529px;width:163px;padding-left:5px;box-sizing:border-box;color:#0000ff;letter-spacing:-0.55px;'>addPeople</div>
<div class='t' style='left:692px;width:88px;padding-left:5px;box-sizing:border-box;letter-spacing:-0.2px;'>00411700</div>
<div class='t b' style='left:780px;width:162px;padding-left:5px;box-sizing:border-box;color:#000;letter-spacing:-0.17px;'>FUN<span class='u'>_</span>004116f0</div>
<div class='t' style='left:942px;width:88px;padding-left:5px;box-sizing:border-box;letter-spacing:-0.2px;'>004116f0</div>
<div class='t' style='left:1030px;width:162px;padding-left:5px;box-sizing:border-box;'>Exact Function Instru...</div>
</div>
<div class='row' style='top:19px;width:1193px;background:#fff'>
<div class='t' style='left:0px;width:88px;padding-left:5px;box-sizing:border-box;letter-spacing:-0.2px;'>00411a61</div>
<div class='t' style='left:88px;width:88px;padding-left:5px;box-sizing:border-box;letter-spacing:-0.2px;'>00411a41</div>
<div class='t' style='left:219px;width:88px;padding-left:5px;box-sizing:border-box;'>Function</div>
<div class='t' style='left:307px;width:68px;padding-left:5px;box-sizing:border-box;'>1.000</div>
<div class='t' style='left:375px;width:68px;padding-left:5px;box-sizing:border-box;'>0.000</div>
<div class='t' style='left:443px;width:43px;text-align:right;padding-right:5px;box-sizing:border-box;'>0</div>
<div class='t' style='left:486px;width:43px;text-align:right;padding-right:5px;box-sizing:border-box;'>-1</div>
<div class='t b' style='left:529px;width:163px;padding-left:5px;box-sizing:border-box;color:#0000ff;'>initializePeople</div>
<div class='t' style='left:692px;width:88px;padding-left:5px;box-sizing:border-box;letter-spacing:-0.2px;'>004117c0</div>
<div class='t b' style='left:780px;width:162px;padding-left:5px;box-sizing:border-box;color:#000;letter-spacing:-0.08px;'>FUN<span class='u'>_</span>004117b0</div>
<div class='t' style='left:942px;width:88px;padding-left:5px;box-sizing:border-box;letter-spacing:-0.2px;'>004117b0</div>
<div class='t' style='left:1030px;width:162px;padding-left:5px;box-sizing:border-box;'>Possible Implied Match</div>
</div>
<div class='row' style='top:38px;width:1193px;background:#eaf1fe'>
<div class='t' style='left:0px;width:88px;padding-left:5px;box-sizing:border-box;letter-spacing:-0.2px;'>00411a69</div>
<div class='t' style='left:88px;width:88px;padding-left:5px;box-sizing:border-box;letter-spacing:-0.2px;'>00411a49</div>
<div class='t' style='left:219px;width:88px;padding-left:5px;box-sizing:border-box;'>Function</div>
<div class='t' style='left:307px;width:68px;padding-left:5px;box-sizing:border-box;'>1.000</div>
<div class='t' style='left:375px;width:68px;padding-left:5px;box-sizing:border-box;'>0.000</div>
<div class='t' style='left:443px;width:43px;text-align:right;padding-right:5px;box-sizing:border-box;'>0</div>
<div class='t' style='left:486px;width:43px;text-align:right;padding-right:5px;box-sizing:border-box;'>-1</div>
<div class='t b' style='left:529px;width:163px;padding-left:5px;box-sizing:border-box;color:#0000ff;'>deployGadget</div>
<div class='t' style='left:692px;width:88px;padding-left:5px;box-sizing:border-box;letter-spacing:-0.2px;'>004118f0</div>
<div class='t b' style='left:780px;width:162px;padding-left:5px;box-sizing:border-box;color:#000;letter-spacing:-0.17px;'>FUN<span class='u'>_</span>004118c0</div>
<div class='t' style='left:942px;width:88px;padding-left:5px;box-sizing:border-box;letter-spacing:-0.2px;'>004118c0</div>
<div class='t' style='left:1030px;width:162px;padding-left:5px;box-sizing:border-box;'>Possible Implied Match</div>
</div>
<div class='row' style='top:57px;width:1193px;background:#fff'>
<div class='t' style='left:0px;width:88px;padding-left:5px;box-sizing:border-box;letter-spacing:-0.2px;'>00411a86</div>
<div class='t' style='left:88px;width:88px;padding-left:5px;box-sizing:border-box;letter-spacing:-0.2px;'>00411a66</div>
<div class='t' style='left:219px;width:88px;padding-left:5px;box-sizing:border-box;'>Function</div>
<div class='t' style='left:307px;width:68px;padding-left:5px;box-sizing:border-box;'>1.000</div>
<div class='t' style='left:375px;width:68px;padding-left:5px;box-sizing:border-box;'>1.000</div>
<div class='t' style='left:443px;width:43px;text-align:right;padding-right:5px;box-sizing:border-box;'>0</div>
<div class='t' style='left:486px;width:43px;text-align:right;padding-right:5px;box-sizing:border-box;'>0</div>
<div class='t b' style='left:529px;width:163px;padding-left:5px;box-sizing:border-box;color:#0000ff;letter-spacing:-0.14px;'><span class='u'>_</span><span class='u'>_</span>RTC<span class='u'>_</span>CheckEsp</div>
<div class='t' style='left:692px;width:88px;padding-left:5px;box-sizing:border-box;letter-spacing:-0.2px;'>00411b80</div>
<div class='t b' style='left:780px;width:162px;padding-left:5px;box-sizing:border-box;color:#0000ff;letter-spacing:-0.14px;'><span class='u'>_</span><span class='u'>_</span>RTC<span class='u'>_</span>CheckEsp</div>
<div class='t' style='left:942px;width:88px;padding-left:5px;box-sizing:border-box;letter-spacing:-0.2px;'>00411b60</div>
<div class='t' style='left:1030px;width:162px;padding-left:5px;box-sizing:border-box;'>Exact Function Instru...</div>
</div>
<div class='row' style='top:76px;width:1193px;background:#eaf1fe'>
<div class='t' style='left:0px;width:88px;padding-left:5px;box-sizing:border-box;letter-spacing:-0.2px;'>00411a4e</div>
<div class='t' style='left:88px;width:88px;padding-left:5px;box-sizing:border-box;letter-spacing:-0.2px;'>00411a2e</div>
<div class='t' style='left:219px;width:88px;padding-left:5px;box-sizing:border-box;'>Data</div>
<div class='t' style='left:307px;width:68px;padding-left:5px;box-sizing:border-box;'>1.000</div>
<div class='t' style='left:375px;width:68px;padding-left:5px;box-sizing:border-box;'>0.000</div>
<div class='t' style='left:443px;width:43px;text-align:right;padding-right:5px;box-sizing:border-box;'>0</div>
<div class='t' style='left:486px;width:43px;text-align:right;padding-right:5px;box-sizing:border-box;'>-1</div>
<div class='t b' style='left:529px;width:163px;padding-left:5px;box-sizing:border-box;color:#000080;'>personList</div>
<div class='t' style='left:692px;width:88px;padding-left:5px;box-sizing:border-box;letter-spacing:-0.2px;'>00418138</div>
<div class='t b' style='left:780px;width:162px;padding-left:5px;box-sizing:border-box;color:#000080;letter-spacing:0.22px;'>DAT<span class='u'>_</span>00418138</div>
<div class='t' style='left:942px;width:88px;padding-left:5px;box-sizing:border-box;letter-spacing:-0.2px;'>00418138</div>
<div class='t' style='left:1030px;width:162px;padding-left:5px;box-sizing:border-box;'>Possible Implied Match</div>
</div>
</div>
<div class='a' style='left:3px;top:488px;width:1195px;height:32px;border-top:1px solid #6e6e6e;border-left:1px solid #6e6e6e;border-right:2px solid #fdfdfd;border-bottom:2px solid #fdfdfd;box-sizing:border-box;background:#e9e9e9'></div>
<div class='lb' style='left:9px;top:494px'>Filter:</div>
<div class='tf' style='left:58px;top:493px;width:1070px'></div>
<svg class='a' style='left:1136px;top:495px' width='16' height='16' viewBox='0 0 16 16'><path d='M3.8 0.5h7.6l4.1 4.1v9.9a1 1 0 0 1-1 1h-10.7a1 1 0 0 1-1-1v-13a1 1 0 0 1 1-1z' fill='#a4c8f8' stroke='#3a72dc'/><path d='M11.4 0.5v4.1h4.1' fill='#d6e6fc' stroke='#3a72dc' stroke-width='0.8'/>
<rect x='4' y='11.3' width='10.4' height='1.3' fill='#4a8af0'/><rect x='4' y='13.2' width='10.4' height='1' fill='#c2dafb'/>
<path d='M3.6 4.8L0.8 7.6L3.6 10.4M5.6 4.8L8.4 7.6L5.6 10.4' fill='none' stroke='#1f6ef2' stroke-width='1.6' stroke-dasharray='1.3 0.7'/></svg><svg class='a' style='left:1163px;top:496px' width='14' height='14' viewBox='0 0 14 14'><g stroke='#6a6a6a' stroke-width='1.4' stroke-linecap='round'><path d='M0.7 2.2H13.3M0.7 7H13.3M0.7 11.8H13.3'/></g><g fill='#6a6a6a'><circle cx='4.2' cy='2.2' r='2'/><circle cx='10.4' cy='7' r='2'/><circle cx='5.6' cy='11.8' r='2'/></g></svg><svg class='a' style='left:1186px;top:501px' width='6' height='4' viewBox='0 0 6 4'><path d='M0 0h6L3 3.2z' fill='#111'/></svg>
<div class='a' style='left:22px;top:525px;width:1158px;height:25px;border-top:2px solid #8a8a8a;border-left:2px solid #8a8a8a;border-right:1px solid #fbfbfb;box-sizing:border-box'></div>
<svg class='a' style='left:2.8px;top:528.7px' width='17' height='17' viewBox='0 0 17 17'><path d='M0.3 7.3L4.7 7.1L6.6 2.4L8.5 1.4L12.8 1.4L16.1 2.4L16.3 7.6L14.7 10.9L11.3 11.8L7.3 16.1L6.1 15.6L6.6 12.8L1.9 12.8L0.5 10.9z' fill='#f21c1c' stroke='#1c0202' stroke-width='1.05' stroke-linejoin='round'/>
<path d='M8.2 1.2L9.4 0.3M15.2 1.4L16.4 0.4' stroke='#c4481a' stroke-width='1.1'/>
<path d='M7.4 3.2L9 2.4L8.6 4.4M12.6 5.2L14 6.6L13 7.8H9.8' fill='none' stroke='#2a0404' stroke-width='0.9'/>
<path d='M11.6 9.6L7.2 15.4' stroke='#7a0a0a' stroke-width='0.9' stroke-dasharray='1 0.6'/>
<path d='M3 9.4L4.8 11.4M4.8 9.4L3 11.4' stroke='#a80c0c' stroke-width='0.8'/>
<circle cx='10.7' cy='5.7' r='0.95' fill='#20e030'/><circle cx='11.9' cy='5.5' r='0.6' fill='#fff'/>
<path d='M0.2 15.8L4.7 14.3M6.2 13.2L7.4 14.6' stroke='#ff9420' stroke-width='1.1' stroke-linecap='round'/></svg>
</div></body></html>
